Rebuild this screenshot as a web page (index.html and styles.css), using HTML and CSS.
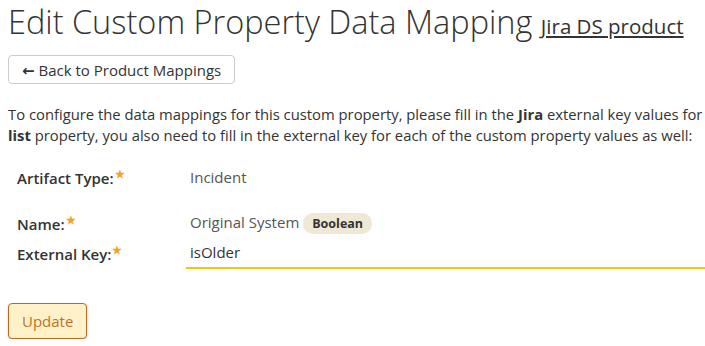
FILE: index.html
```html
<!DOCTYPE html>
<html lang="en">
<head>
  <meta charset="UTF-8">
  <title>Edit Custom Property Data Mapping</title>
  <link rel="stylesheet" href="styles.css">
</head>
<body>
  <div class="page">
    <h1>Edit Custom Property Data Mapping <a href="#" class="product-link">Jira DS product</a></h1>

    <button class="back-button"><span class="arrow">&larr;</span> Back to Product Mappings</button>

    <p class="intro">
      To configure the data mappings for this custom property, please fill in the <b>Jira</b> external key values for the property below. If this is a<br>
      <b>list</b> property, you also need to fill in the external key for each of the custom property values as well:
    </p>

    <div class="mapping-form">
      <div class="form-row spaced">
        <label>Artifact Type:<span class="required">&#9733;</span></label>
        <div class="value">Incident</div>
      </div>
      <div class="form-row">
        <label>Name:<span class="required">&#9733;</span></label>
        <div class="value">Original System <span class="badge">Boolean</span></div>
      </div>
      <div class="form-row">
        <label for="external-key">External Key:<span class="required">&#9733;</span></label>
        <input type="text" id="external-key" value="isOlder">
      </div>
    </div>

    <button class="update-button">Update</button>
  </div>
</body>
</html>
```

FILE: styles.css
```css
* {
  margin: 0;
  padding: 0;
  box-sizing: border-box;
}

html, body {
  overflow: hidden;
}

body {
  font-family: 'Open Sans', sans-serif;
  color: #333;
  background: #fff;
}

.page {
  width: 1100px;
  padding: 0 8px;
}

h1 {
  font-size: 32.5px;
  font-weight: 300;
  color: #333;
  line-height: 44px;
}

.product-link {
  font-size: 20.5px;
  font-weight: 400;
  color: #333;
  text-decoration: underline;
}

.back-button {
  margin-top: 7px;
  font-family: inherit;
  font-size: 15px;
  color: #333;
  background: #fff;
  border: 1px solid #ccc;
  border-radius: 4px;
  height: 29px;
  padding: 0 13px;
  cursor: pointer;
}

.back-button .arrow {
  font-family: 'DejaVu Sans', sans-serif;
  font-size: 15px;
  font-weight: 700;
}

.intro {
  margin-top: 20px;
  font-size: 14.8px;
  line-height: 21px;
  color: #333;
}

.intro b {
  font-weight: 700;
}

.mapping-form {
  margin-top: 17px;
  padding-left: 9px;
}

.form-row {
  display: grid;
  grid-template-columns: 169px 530px;
  align-items: center;
  min-height: 28px;
}

.form-row.spaced {
  margin-bottom: 18px;
}

.form-row label {
  font-size: 15px;
  font-weight: 600;
  color: #333;
}

.required {
  color: #f0a22b;
  font-size: 11px;
  vertical-align: 6px;
  margin-left: 1px;
}

.value {
  font-size: 15px;
  color: #555;
  padding-left: 4px;
}

.badge {
  display: inline-block;
  background: #efe8d5;
  color: #333;
  font-size: 12.5px;
  font-weight: 700;
  padding: 2px 9px;
  border-radius: 10px;
}

.form-row input {
  font-family: inherit;
  font-size: 15px;
  color: #333;
  border: none;
  border-bottom: 2px solid #f5c518;
  padding: 5px 4px;
  outline: none;
  width: 530px;
}

.update-button {
  margin-top: 34px;
  font-family: inherit;
  font-size: 15px;
  color: #c1702a;
  background: #fff2c9;
  border: 1px solid #c4651d;
  border-radius: 4px;
  height: 36px;
  padding: 0 13px;
  box-shadow: 0 1px 3px rgba(0, 0, 0, 0.15);
  cursor: pointer;
}
```
